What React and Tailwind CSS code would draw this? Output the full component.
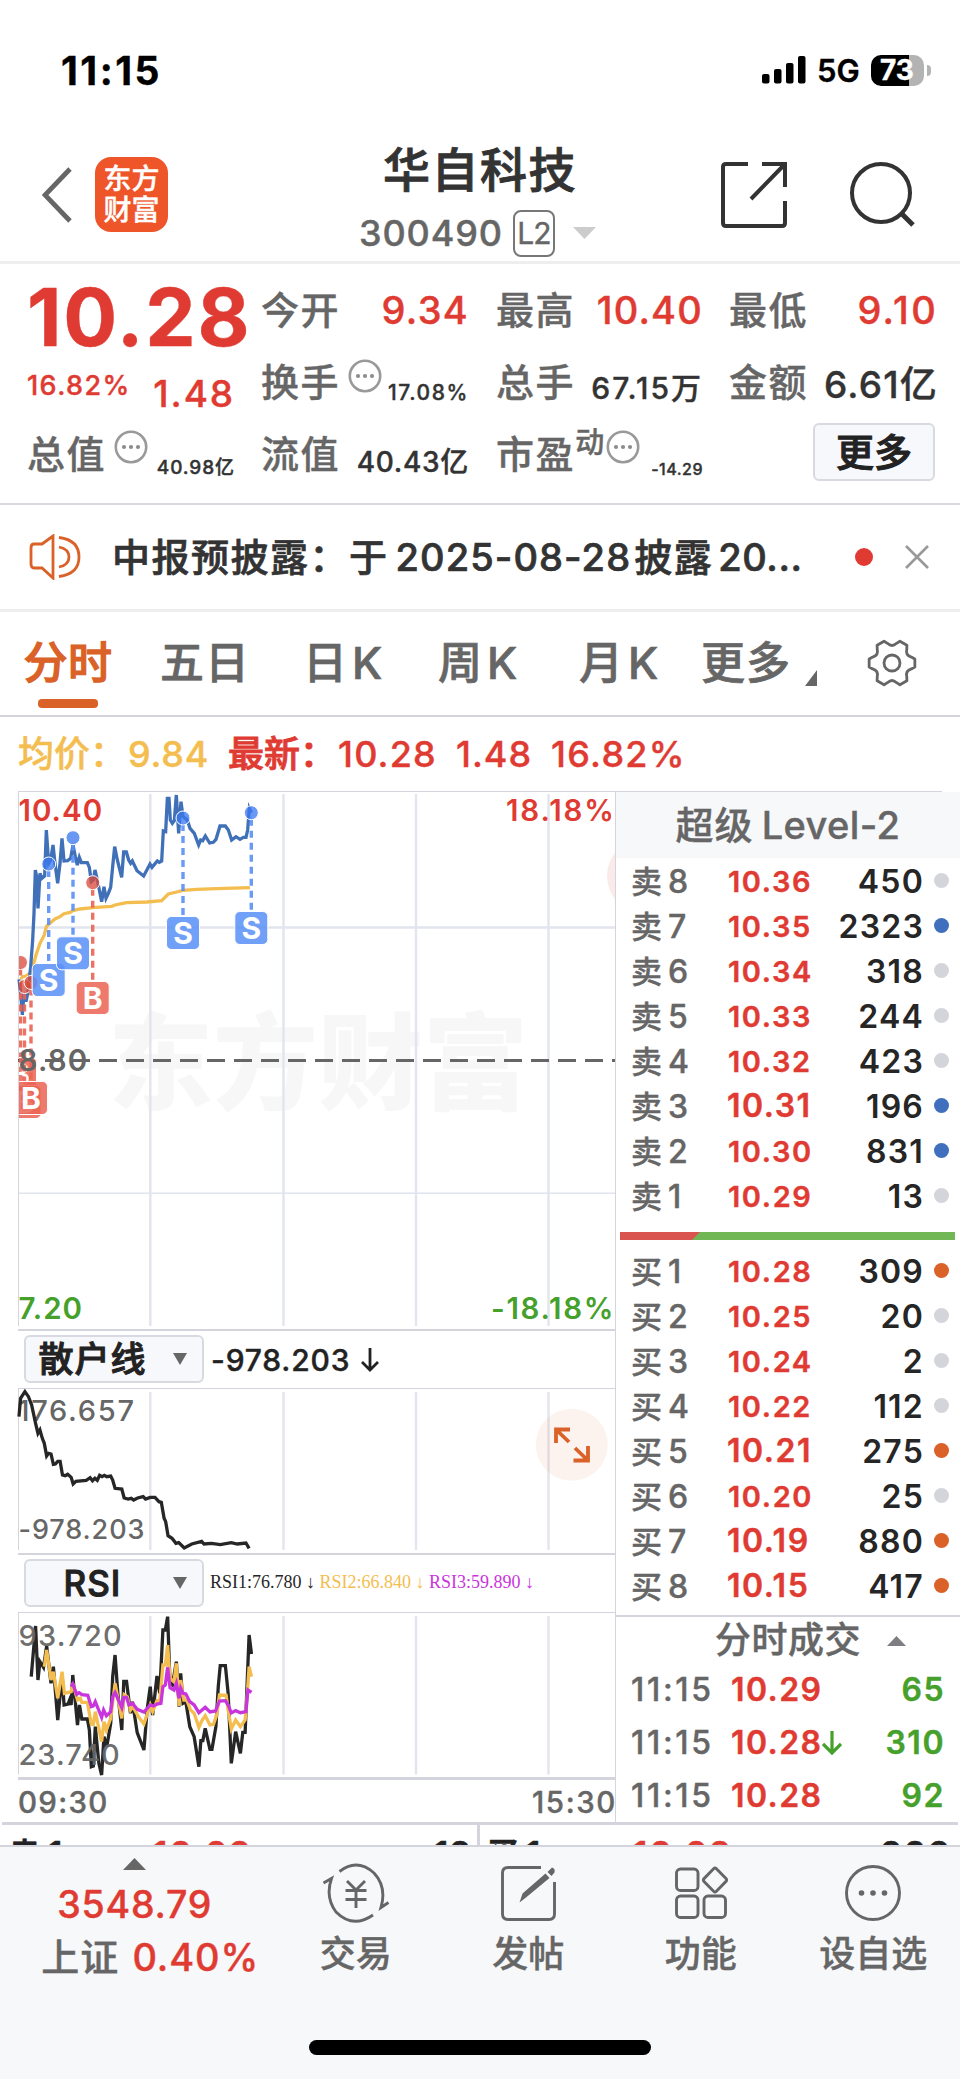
import React from 'react';
import clsx from 'clsx';

const sellRows = [
  { n: 8, price: '10.36', vol: '450', dot: 'gray' },
  { n: 7, price: '10.35', vol: '2323', dot: 'blue' },
  { n: 6, price: '10.34', vol: '318', dot: 'gray' },
  { n: 5, price: '10.33', vol: '244', dot: 'gray' },
  { n: 4, price: '10.32', vol: '423', dot: 'gray' },
  { n: 3, price: '10.31', vol: '196', dot: 'blue', big: true },
  { n: 2, price: '10.30', vol: '831', dot: 'blue' },
  { n: 1, price: '10.29', vol: '13', dot: 'gray' },
];

const buyRows = [
  { n: 1, price: '10.28', vol: '309', dot: 'orange' },
  { n: 2, price: '10.25', vol: '20', dot: 'gray' },
  { n: 3, price: '10.24', vol: '2', dot: 'gray' },
  { n: 4, price: '10.22', vol: '112', dot: 'gray' },
  { n: 5, price: '10.21', vol: '275', dot: 'orange', big: true },
  { n: 6, price: '10.20', vol: '25', dot: 'gray' },
  { n: 7, price: '10.19', vol: '880', dot: 'orange', big: true },
  { n: 8, price: '10.15', vol: '417', dot: 'orange', big: true },
];

const trades = [
  { time: '11:15', price: '10.29', vol: '65' },
  { time: '11:15', price: '10.28', vol: '310', down: true },
  { time: '11:15', price: '10.28', vol: '92' },
];

const dotColors = {
  gray: 'bg-[#d4d5db]',
  blue: 'bg-[#4070bd]',
  orange: 'bg-[#da6127]',
};

const GRID_X = [150.3, 283.5, 416, 548.5];

// Traces are stored in their own drawing units and scaled by the group around them
const PRICE =
  '57,598 62,640 67,705 72,640 78,665 85,630 92,560 98,480 102,400 106,270 110,290 114,385 120,280 126,295 134,288 139,150 146,250 152,240 159,195 165,250 173,310 180,250 186,175 192,243 203,242 212,235 219,195 226,230 232,255 238,232 244,248 262,248 268,262 274,305 280,300 285,270 292,300 305,365 312,320 318,355 325,340 332,322 338,260 344,200 352,240 365,292 371,216 379,216 386,240 392,250 397,243 411,272 431,288 450,252 456,262 472,243 478,247 485,243 490,153 497,155 502,55 507,55 511,120 517,130 523,122 529,45 536,160 543,65 549,110 562,120 570,145 583,160 596,195 602,180 608,182 616,168 629,189 640,187 648,178 660,138 676,138 685,150 695,180 708,170 720,178 730,172 738,172 743,150 748,85 754,98';
const AVERAGE =
  '62,598 68,590 78,588 92,578 100,555 108,525 120,490 133,465 139,440 146,433 165,417 180,410 192,401 210,397 219,392 240,387 278,383 335,379 345,375 365,371 380,368 440,366 485,362 505,342 530,336 549,331 590,328 650,326 750,323';
const RETAIL =
  '48,290 52,235 63,215 72,230 80,255 90,310 96,340 101,330 107,355 112,370 118,408 123,400 129,402 135,433 140,432 146,424 152,424 158,465 165,467 171,463 180,472 185,492 192,484 218,481 228,473 234,482 240,475 246,481 252,466 258,470 264,466 270,470 280,468 285,480 291,505 308,507 314,534 324,537 332,535 338,540 348,534 362,530 368,537 380,532 392,532 402,545 408,547 415,595 419,605 425,647 435,655 445,670 452,668 466,684 485,672 510,664 516,672 535,670 557,674 585,668 600,672 622,669 630,685';
const RSI1 =
  '79,380 90,228 96,390 101,335 110,352 118,288 129,400 135,350 146,510 157,375 162,465 172,462 176,450 180,465 184,375 190,450 196,525 201,465 207,507 221,507 226,540 231,650 236,648 241,530 250,640 257,675 263,560 270,590 280,520 285,380 291,315 298,430 308,540 313,394 320,394 330,490 335,455 347,548 364,600 372,480 380,410 386,495 397,378 404,430 412,240 418,240 424,200 430,400 436,405 446,335 453,470 457,370 463,460 470,455 480,530 491,560 503,650 508,572 513,572 519,535 531,598 536,598 546,530 552,410 557,347 570,347 577,430 585,640 596,545 608,610 614,547 620,547 625,400 630,255 636,312';
const RSI2 =
  '112,350 118,300 129,390 135,365 146,445 157,365 163,430 180,425 184,400 196,450 203,445 207,457 221,457 231,523 236,523 241,485 257,575 263,515 269,540 280,505 291,400 298,445 308,505 314,434 322,440 330,480 336,470 350,500 364,522 380,465 386,485 397,452 404,455 412,345 418,345 424,285 430,385 440,395 446,340 453,468 457,390 465,450 472,450 482,480 491,490 503,532 510,513 519,497 531,525 540,523 548,495 555,435 572,436 577,480 585,537 596,510 608,530 620,510 625,440 630,350 636,380';
const RSI3 =
  '180,410 184,402 194,433 200,428 207,434 222,436 231,470 236,468 241,455 257,502 262,480 269,497 280,485 285,440 291,428 308,473 313,442 320,442 326,465 335,460 347,478 364,486 380,465 388,468 397,462 407,460 412,410 418,405 424,352 430,413 440,420 446,400 453,445 457,415 463,430 470,432 480,455 491,465 503,488 519,472 531,486 545,483 555,453 570,452 577,465 585,489 596,482 608,488 622,485 627,420 636,427';

function Trace({ points, color, width = 3.3 }) {
  return (
    <polyline
      points={points}
      fill="none"
      stroke={color}
      strokeWidth={width}
      strokeLinejoin="miter"
      vectorEffect="non-scaling-stroke"
    />
  );
}

function MoreDots({ className }) {
  return (
    <svg viewBox="0 0 34 34" className={clsx('h-[34px] w-[34px] shrink-0', className)}>
      <circle cx="17" cy="17" r="15.2" fill="none" stroke="#999" strokeWidth="2.6" />
      <circle cx="10" cy="17" r="2.1" fill="#8c8c8c" />
      <circle cx="17" cy="17" r="2.1" fill="#8c8c8c" />
      <circle cx="24" cy="17" r="2.1" fill="#8c8c8c" />
    </svg>
  );
}

function StatusBar() {
  return (
    <div className="flex h-[140px] items-center justify-between pl-[61px] pr-[29px] text-black">
      <span className="text-[39px] font-bold leading-none tracking-[2.5px]">11:15</span>
      <div className="flex items-center">
        <svg viewBox="0 0 44 28" className="h-7 w-11">
          <rect x="0" y="18" width="7.5" height="9.5" rx="2" />
          <rect x="12" y="13" width="7.5" height="14.5" rx="2" />
          <rect x="24" y="7" width="7.5" height="20.5" rx="2" />
          <rect x="36" y="0" width="7.5" height="27.5" rx="2" />
        </svg>
        <span className="ml-[11px] w-[54px] text-[31px] font-semibold leading-none">5G</span>
        <div className="flex h-[31px] w-[53px] items-center overflow-hidden rounded-[10px] bg-[linear-gradient(to_right,#000_38px,#b3b3b3_38px)]">
          <span className="pl-[9px] text-[28px] font-bold leading-none text-white">73</span>
        </div>
        <div className="ml-[3px] h-[11px] w-1 rounded-r-full bg-[#b3b3b3]" />
      </div>
    </div>
  );
}

function Header() {
  return (
    <div className="grid h-[124px] grid-cols-[1fr_auto_1fr] border-b-[3px] border-[#eee]">
      <div className="flex items-start pl-[42px] pt-[17px]">
        <svg viewBox="0 0 30 56" className="mt-2.5 h-14 w-[30px]">
          <path d="M28 2 L3 28 L28 54" fill="none" stroke="#666" strokeWidth="4.8" />
        </svg>
        <div className="ml-[23px] flex h-[75px] w-[73px] flex-col items-center justify-center rounded-2xl bg-[#ee562a] text-[28px] font-medium leading-[31px] text-white">
          <span>东方</span>
          <span>财富</span>
        </div>
      </div>
      <div className="flex flex-col items-center">
        <h1 className="h-[58px] text-[47px] font-medium leading-[59px] tracking-[1.5px] text-[#333] [-webkit-text-stroke:0.9px]">
          华自科技
        </h1>
        <div className="-ml-[5px] flex h-[70px] items-center">
          <span className="text-[36px] font-medium leading-none tracking-[0.9px] text-[#666]">300490</span>
          <span className="ml-2.5 flex h-[47px] w-[42px] items-center justify-center rounded-lg border-2 border-[#777] text-[30px] leading-none tracking-[-1px] text-[#666]">
            L2
          </span>
          <svg viewBox="0 0 23 12" className="ml-[18px] h-3 w-[23px]">
            <path d="M0 0 H23 L11.5 12 Z" fill="#ccc" />
          </svg>
        </div>
      </div>
      <div className="flex items-start justify-end pr-[43px] pt-[21px]">
        <svg viewBox="0 0 70 68" className="h-[68px] w-[70px]" fill="none" stroke="#333" strokeWidth="4">
          <path d="M28 3 H6 Q3 3 3 6 V62 Q3 65 6 65 H62 Q65 65 65 62 V40" />
          <path d="M42 3 H65 V26 M65 3 L31 38" />
        </svg>
        <svg viewBox="0 0 68 68" className="ml-[59px] h-[68px] w-[68px]" fill="none" stroke="#333" strokeWidth="4">
          <circle cx="32" cy="32" r="29" />
          <path d="M53 53 L64 64" strokeWidth="5" />
        </svg>
      </div>
    </div>
  );
}

function Quote({ label, value, className, extra }) {
  return (
    <div className="flex h-[72px] items-center">
      <span className="whitespace-nowrap text-[38px] font-medium leading-none tracking-[1.6px] text-[#666]">{label}</span>
      {extra}
      <span className={clsx('ml-auto whitespace-nowrap font-medium leading-none', className)}>{value}</span>
    </div>
  );
}

function QuotePanel() {
  return (
    <div className="flex h-[241px] border-b-2 border-[#d9d9e0] pl-[27px] pt-[10px]">
      <div className="w-[208px]">
        <div className="flex h-[72px] items-center pt-[13px]">
          <span className="text-[80px] font-bold leading-none tracking-[1.8px] text-[#e03b32]">10.28</span>
        </div>
        <div className="flex h-[72px] items-center font-medium text-[#e03b32]">
          <span className="mt-[7px] text-[27px] leading-none tracking-[1.4px]">16.82%</span>
          <span className="ml-auto mt-[22px] text-[37px] leading-none tracking-[1.9px]">1.48</span>
        </div>
        <Quote
          label="总值"
          value="40.98亿"
          className="mt-[26px] text-[19px] tracking-[0.9px] text-[#333]"
          extra={<MoreDots className="-mt-[15px] ml-[8px]" />}
        />
      </div>
      <div className="ml-[26px] w-[208px]">
        <Quote label="今开" value="9.34" className="text-[38px] tracking-[1.3px] text-[#e03b32]" />
        <Quote
          label="换手"
          value="17.08%"
          className="mt-[21px] text-[21px] tracking-[1.6px] text-[#333]"
          extra={<MoreDots className="-mt-[13px] ml-[8px]" />}
        />
        <Quote label="流值" value="40.43亿" className="mt-[15px] text-[28px] tracking-[0.7px] text-[#333]" />
      </div>
      <div className="ml-[27px] w-[207px]">
        <Quote label="最高" value="10.40" className="text-[38px] tracking-[1.2px] text-[#e03b32]" />
        <Quote label="总手" value="67.15万" className="mt-[11px] text-[30px] tracking-[2px] text-[#333]" />
        <Quote
          label="市盈"
          value="-14.29"
          className="mt-[30px] text-[16px] tracking-[0.5px] text-[#333]"
          extra={
            <>
              <span className="-mt-[24px] text-[29px] font-medium leading-none text-[#666]">动</span>
              <MoreDots className="-mt-[15px] ml-[2px]" />
            </>
          }
        />
      </div>
      <div className="ml-[26px] w-[209px]">
        <Quote label="最低" value="9.10" className="text-[38px] tracking-[2.3px] text-[#e03b32]" />
        <Quote label="金额" value="6.61亿" className="mt-[4px] text-[37px] tracking-[1.2px] text-[#333]" />
        <div className="flex h-[72px] items-center justify-end">
          <button className="mb-[5px] mr-[3px] flex h-[58px] w-[122px] items-center justify-center rounded-md border-2 border-[#d9dae1] bg-[#f7f8fb] text-[38px] font-medium leading-none text-[#222] [-webkit-text-stroke:1px]">
            更多
          </button>
        </div>
      </div>
    </div>
  );
}

function Notice() {
  return (
    <div className="flex h-[107px] items-center border-b-[3px] border-[#eee] pl-[29px] pr-[31px]">
      <svg viewBox="0 0 52 46" className="h-[46px] w-[52px]" fill="none" stroke="#da6127" strokeWidth="2.8">
        <path d="M13 10 L24 2 V44 L13 34 H5 Q2 34 2 30 V14 Q2 10 5 10 Z" />
        <path d="M30 13 Q40 15 40 23 Q40 31 30 33" />
        <path d="M30 3.5 Q50 6 50 23 Q50 40 30 42.5" />
      </svg>
      <span className="ml-[31px] whitespace-nowrap text-[38px] font-medium leading-none tracking-[1.5px] text-[#333] [-webkit-text-stroke:0.7px]">
        中报预披露：于<span className="ml-[7px] mr-[3px] tracking-[1.1px]">2025-08-28</span>披露
        <span className="ml-[5px] tracking-[0.6px]">20...</span>
      </span>
      <span className="ml-auto h-[18px] w-[18px] rounded-full bg-[#e03b32]" />
      <svg viewBox="0 0 24 24" className="ml-[32px] h-6 w-6" stroke="#999" strokeWidth="2.6">
        <path d="M1 1 L23 23 M23 1 L1 23" />
      </svg>
    </div>
  );
}

// Six flat teeth joined by concave valleys
function gearPath() {
  const at = (r, deg) => {
    const a = (deg * Math.PI) / 180;
    return `${(26 + r * Math.cos(a)).toFixed(2)} ${(25 + r * Math.sin(a)).toFixed(2)}`;
  };
  let d = '';
  for (let i = 0; i < 6; i++) {
    const t = i * 60;
    d += `${i ? 'L' : 'M'}${at(23.2, t - 10)} L${at(23.2, t + 10)} L${at(20.2, t + 17)} Q${at(15.4, t + 30)} ${at(20.2, t + 43)} `;
  }
  return d + 'Z';
}

function Tabs() {
  const tab = 'whitespace-nowrap text-[44px] font-medium leading-none tracking-[1px] text-[#666] [-webkit-text-stroke:0.7px]';
  return (
    <div className="flex h-[105px] items-start border-b-2 border-[#d4d5dc] pt-[29px]">
      <div className="ml-[22px] flex w-[92px] flex-col items-center">
        <span className="whitespace-nowrap text-[44px] font-medium leading-none tracking-[0.5px] text-[#da6127] [-webkit-text-stroke:1.2px]">
          分时
        </span>
        <span className="mt-[14px] h-[9px] w-[60px] rounded-[4px] bg-[#da6127]" />
      </div>
      <span className={clsx(tab, 'ml-[46px] w-[143px]')}>五日</span>
      <span className={clsx(tab, 'w-[135px]')}>日<span className="ml-1">K</span></span>
      <span className={clsx(tab, 'w-[141px]')}>周<span className="ml-1">K</span></span>
      <span className={clsx(tab, 'w-[122px]')}>月<span className="ml-1">K</span></span>
      <span className={clsx(tab, 'w-[104px]')}>更多</span>
      <svg viewBox="0 0 12 16" className="mt-[29px] h-4 w-3">
        <path d="M12 0 V16 H0 Z" fill="#666" />
      </svg>
      <svg
        viewBox="0 0 52 50"
        className="-mt-[3px] ml-[49px] h-[50px] w-[52px]"
        fill="none"
        stroke="#666"
        strokeWidth="2.8"
        strokeLinejoin="round"
      >
        <path d={gearPath()} />
        <circle cx="26" cy="25" r="8" />
      </svg>
    </div>
  );
}

function Marker({ type, x, y, boxY, boxX = x }) {
  const color = type === 'S' ? '#5a90f8' : '#ea6454';
  return (
    <g>
      <line x1={x} x2={x} y1={y + 6} y2={boxY - 16} stroke={color} strokeWidth="3.4" strokeDasharray="7 5" opacity="0.9" />
      <circle cx={x} cy={y} r="7" fill={type === 'S' ? '#3a77f0' : '#d94a3a'} fillOpacity="0.76" stroke="#fff" strokeWidth="1" />
      <rect x={boxX - 16.5} y={boxY - 16.5} width="33" height="33" rx="5" fill={color} fillOpacity="0.86" stroke="#fff" strokeWidth="1" />
      <text x={boxX} y={boxY + 11} fill="#fff" fontSize="30" fontWeight="700" textAnchor="middle">
        {type}
      </text>
    </g>
  );
}

function PriceChart() {
  return (
    <svg viewBox="0 791 615 540" className="block h-[540px] w-[615px]">
      <defs>
        <clipPath id="plot">
          <rect x="19" y="791" width="596" height="538" />
        </clipPath>
      </defs>
      <text x="108" y="1101" fill="#f7f7f7" fontSize="105" fontWeight="900">
        东方财富
      </text>
      <circle cx="645" cy="876" r="38" fill="#fbeaea" />
      <g stroke="#e2e4ee" strokeWidth="2.4">
        {GRID_X.map((x) => (
          <line key={x} x1={x} x2={x} y1="794" y2="1326" />
        ))}
        <line x1="19" x2="615" y1="927.5" y2="927.5" />
        <line x1="19" x2="615" y1="1193.2" y2="1193.2" strokeWidth="1.6" />
      </g>
      <line x1="18" x2="615" y1="791.5" y2="791.5" stroke="#d4d5dc" />
      <line x1="18.5" x2="18.5" y1="792" y2="1326" stroke="#d4d5dc" />
      <line x1="18" x2="615" y1="1330" y2="1330" stroke="#d4d5dc" strokeWidth="2" />
      <line x1="18" x2="615" y1="1060.5" y2="1060.5" stroke="#666" strokeWidth="3" strokeDasharray="18 9" />
      <g transform="translate(0 780) scale(0.33333)">
        <Trace points={AVERAGE} color="#f4bd50" />
        <Trace points={PRICE} color="#3f70b8" />
      </g>
      <g clipPath="url(#plot)">
        <Marker type="B" x={20.5} y={962.5} boxX={20} boxY={1074} />
        <Marker type="B" x={24.5} y={986.5} boxX={24.5} boxY={1102} />
        <Marker type="B" x={31} y={982.5} boxX={31} boxY={1098} />
        <Marker type="S" x={48.7} y={864} boxY={980} />
        <Marker type="S" x={73} y={837.7} boxY={953.3} />
        <Marker type="B" x={92.7} y={882.7} boxY={998} />
        <Marker type="S" x={183} y={818} boxY={933} />
        <Marker type="S" x={251.3} y={812.7} boxY={928} />
      </g>
      <g fontSize="29.5" fontWeight="600">
        <text x="18.5" y="821.3" fill="#e03b32" letterSpacing="1">10.40</text>
        <text x="506" y="821.3" fill="#e03b32" letterSpacing="1.9">18.18%</text>
        <text x="18.5" y="1070.5" fill="#666" letterSpacing="1.2">8.80</text>
        <text x="18.5" y="1318.5" fill="#46a02c" letterSpacing="1">7.20</text>
        <text x="491" y="1318.5" fill="#46a02c" letterSpacing="1.7">-18.18%</text>
      </g>
    </svg>
  );
}

function IndicatorBar({ name, children }) {
  return (
    <div className="flex h-[57px] items-start pl-6 pt-1">
      <button className="flex h-[48px] w-[180px] shrink-0 items-center rounded-md border-2 border-[#d9dae1] bg-[#f7f8fb] pr-[15px]">
        <span className="w-[133px] whitespace-nowrap text-center text-[35px] font-medium leading-none tracking-[1px] text-[#222] [-webkit-text-stroke:1px]">
          {name}
        </span>
        <svg viewBox="0 0 14 12" className="ml-auto h-3 w-3.5">
          <path d="M0 0 H14 L7 12 Z" fill="#666" />
        </svg>
      </button>
      {children}
    </div>
  );
}

function Frame({ top, bottom, lineWidth }) {
  return (
    <>
      <g stroke="#e2e4ee" strokeWidth="2.4">
        {GRID_X.map((x) => (
          <line key={x} x1={x} x2={x} y1={top + 4} y2={bottom - 4} />
        ))}
      </g>
      <line x1="18" x2="615" y1={top + 0.5} y2={top + 0.5} stroke="#d4d5dc" />
      <line x1="18.5" x2="18.5" y1={top} y2={bottom - 4} stroke="#d4d5dc" />
      <line x1="18" x2="615" y1={bottom} y2={bottom} stroke="#d4d5dc" strokeWidth={lineWidth} />
    </>
  );
}

function RetailChart() {
  return (
    <svg viewBox="0 1388 615 167" className="block h-[167px] w-[615px]">
      <Frame top={1388} bottom={1554} lineWidth={2} />
      <g fontWeight="550" fill="#666">
        <text x="17.5" y="1421" fontSize="29" letterSpacing="1.7">176.657</text>
        <text x="18.5" y="1538.5" fontSize="27" letterSpacing="0.9">-978.203</text>
      </g>
      <g transform="translate(0 1320) scale(0.3954 0.33333)">
        <Trace points={RETAIL} color="#262626" />
      </g>
      <circle cx="571.8" cy="1444.7" r="36" fill="#da6127" fillOpacity="0.08" />
      <g fill="none" stroke="#da6127" strokeWidth="3.8">
        <path d="M556 1443 V1429.5 H570 M556.5 1430 L569 1442" />
        <path d="M588 1446 V1460.5 H573.5 M587.5 1460 L575 1448" />
      </g>
    </svg>
  );
}

function RsiChart() {
  return (
    <svg viewBox="0 1612 615 168" className="block h-[168px] w-[615px]">
      <Frame top={1612} bottom={1778.5} lineWidth={3} />
      <g transform="translate(0 1550) scale(0.3954 0.33333)">
        <Trace points={RSI1} color="#262626" />
        <Trace points={RSI2} color="#f4bd50" />
        <Trace points={RSI3} color="#c935dd" />
      </g>
      <g fontWeight="550" fontSize="29" fill="#666" fillOpacity="0.95">
        <text x="18.5" y="1645.5" letterSpacing="1.2">93.720</text>
        <text x="18.5" y="1765" letterSpacing="1">23.740</text>
      </g>
    </svg>
  );
}

function ChartColumn() {
  return (
    <div className="w-[616px] border-r border-[#d4d5dc]">
      <PriceChart />
      <IndicatorBar name="散户线">
        <span className="ml-[7px] mt-[10px] text-[30px] font-medium leading-none tracking-[0.8px] text-[#222]">-978.203</span>
        <svg viewBox="0 0 18 24" className="ml-[11px] mt-[13px] h-6 w-[18px]" fill="none" stroke="#222" strokeWidth="2.8">
          <path d="M9 0 V22 M1 14 L9 22 L17 14" />
        </svg>
      </IndicatorBar>
      <RetailChart />
      <IndicatorBar name="RSI">
        <div className="ml-[6px] mt-[14px] whitespace-pre font-['Liberation_Serif',serif] text-[18px] leading-none text-[#262626] [-webkit-text-stroke:0px]">
          RSI1:76.780 ↓ <span className="text-[#f4bd50]">RSI2:66.840 ↓ </span>
          <span className="text-[#c935dd]">RSI3:59.890 ↓</span>
        </div>
      </IndicatorBar>
      <RsiChart />
      <div className="flex h-[42px] items-center justify-between pl-[18px] pt-[3px] text-[29.5px] font-medium leading-none tracking-[1.3px] text-[#666]">
        <span>09:30</span>
        <span className="-mr-[2px] tracking-[1.6px]">15:30</span>
      </div>
    </div>
  );
}

function DepthRow({ side, row }) {
  return (
    <div className="flex h-[45px] items-center pl-[15px] pr-[11px] leading-none">
      <span className="w-[37px] pt-0.5 text-[31px] font-medium text-[#666]">{side}</span>
      <span className="w-[58px] pt-0.5 text-[32px] font-medium text-[#666]">{row.n}</span>
      <span
        className={clsx(
          'w-[100px] whitespace-nowrap pt-px font-semibold text-[#e03b32]',
          row.big ? 'ml-[1px] text-[32px] tracking-[1.5px]' : 'ml-[2px] text-[29px] tracking-[1.6px]'
        )}
      >
        {row.price}
      </span>
      <span className="ml-auto pt-0.5 text-[32px] font-semibold tracking-[1.2px] text-[#262626] [-webkit-text-stroke:0px]">{row.vol}</span>
      <span className={clsx('ml-[10px] h-[15px] w-[15px] rounded-full', dotColors[row.dot])} />
    </div>
  );
}

function DepthColumn() {
  return (
    <div className="flex w-[344px] flex-col">
      <div className="mr-[18px] h-px bg-[#d4d5dc]" />
      <div className="flex h-[66px] items-center justify-center whitespace-nowrap bg-[#f7f8fa] text-[38px] font-medium leading-none text-[#666]">
        <span className="tracking-[1px]">超级</span>
        <span className="ml-2 tracking-[0.4px]">Level-2</span>
      </div>
      {sellRows.map((row) => (
        <DepthRow key={row.n} side="卖" row={row} />
      ))}
      <div className="ml-1 mr-[5px] mt-[14px] h-2 bg-[#72b755]">
        <div className="h-2 w-[80px] bg-[#d9544f] [clip-path:polygon(0_0,100%_0,72px_100%,0_100%)]" />
      </div>
      <div className="mt-2">
        {buyRows.map((row) => (
          <DepthRow key={row.n} side="买" row={row} />
        ))}
      </div>
      <div className="mt-[7px] h-0.5 bg-[#d4d5dc]" />
      <div className="flex h-[45px] items-center pl-[99px] text-[36px] font-medium leading-none tracking-[0.5px] text-[#666]">
        分时成交
        <svg viewBox="0 0 19 10" className="ml-[26px] mt-0.5 h-2.5 w-[19px]">
          <path d="M0 10 L9.5 0 L19 10 Z" fill="#7d7d83" />
        </svg>
      </div>
      {trades.map((trade, i) => (
        <div key={i} className="flex h-[53px] items-center pl-[15px] pr-[15px] pt-0.5 text-[32px] font-semibold leading-none">
          <span className="w-[100px] font-medium tracking-[2.7px] text-[#666]">{trade.time}</span>
          <span className="tracking-[1.4px] text-[#e03b32]">{trade.price}</span>
          {trade.down && (
            <svg viewBox="0 0 20 26" className="h-[26px] w-5" fill="none" stroke="#46a02c" strokeWidth="3.2">
              <path d="M10 1 V23 M1 14 L10 23 L19 14" />
            </svg>
          )}
          <span className="ml-auto tracking-[1.5px] text-[#46a02c]">{trade.vol}</span>
        </div>
      ))}
    </div>
  );
}

// First line of the order list, cut off by the bottom bar
function OrderPeek() {
  return (
    <div className="flex h-5 overflow-hidden text-[34px] font-semibold leading-[58px] text-[#222]">
      <div className="flex w-[480px] border-r-[3px] border-[#d4d5dc] pl-[9px] pr-[5px]">
        <span className="text-[31px]">卖</span>
        <span className="ml-2 w-[105px]">1</span>
        <span className="tracking-[2px] text-[#e03b32]">10.29</span>
        <span className="ml-auto tracking-[1px]">13</span>
      </div>
      <div className="flex w-[480px] pl-[7px] pr-[8px]">
        <span className="text-[31px]">买</span>
        <span className="ml-2 w-[107px]">1</span>
        <span className="tracking-[2px] text-[#e03b32]">10.28</span>
        <span className="ml-auto tracking-[2px]">309</span>
      </div>
    </div>
  );
}

function NavItem({ label, children }) {
  return (
    <div className="flex w-[172.5px] flex-col items-center pt-[13px]">
      <svg viewBox="0 0 70 66" className="h-[66px] w-[70px]" fill="none" stroke="#666" strokeWidth="2.9">
        {children}
      </svg>
      <span className="mt-[10px] whitespace-nowrap text-[36px] font-medium leading-none text-[#666]">{label}</span>
    </div>
  );
}

function BottomBar() {
  return (
    <div className="flex h-[234px] flex-col border-t-2 border-[#d4d5dc] bg-[#f7f8fa]">
      <div className="flex h-[193px]">
        <div className="flex w-[269.5px] flex-col items-center pt-[11px]">
          <svg viewBox="0 0 23 12" className="h-3 w-[23px]">
            <path d="M0 12 L11.5 0 L23 12 Z" fill="#666" />
          </svg>
          <span className="mt-[16px] text-[37.5px] font-medium leading-none tracking-[0.8px] text-[#e03b32]">3548.79</span>
          <div className="ml-[31px] mt-[14px] flex items-center text-[38px] font-medium leading-none">
            <span className="tracking-[1px] text-[#666]">上证</span>
            <span className="ml-[13px] tracking-[0.9px] text-[#e03b32]">0.40%</span>
          </div>
        </div>
        <NavItem label="交易">
          <path d="M2.5 23 L10.5 18.5 Q4 37 15 52 Q32 69 52 55" />
          <path d="M18.5 11.5 Q36 -2 53 13 Q66 27 60 47.5 L67.5 42.5" />
          <path d="M26 21 L35 30 L44 21 M24.5 30.5 H45.5 M24.5 39.5 H45.5 M35 30 V48" />
        </NavItem>
        <NavItem label="发帖">
          <path d="M48 7.5 H15 Q9.5 7.5 9.5 13 V54 Q9.5 59.5 15 59.5 H56 Q61.5 59.5 61.5 54 V22" />
          <path d="M26.5 42.5 L29.5 33.5 L52.5 13.5 L56.5 18 L33 37.5 Z M54.5 12 L59 7.5 Q62.5 8.5 61.5 12.5 L58.5 16 Z" fill="#666" stroke="none" />
        </NavItem>
        <NavItem label="功能">
          <rect x="10.5" y="9" width="21.5" height="21.5" rx="4" />
          <rect x="10.5" y="36" width="21.5" height="21.5" rx="4" />
          <rect x="38" y="36" width="21.5" height="21.5" rx="4" />
          <path d="M47.6 8.7 Q49 7.3 50.4 8.7 L60 18.6 Q61.4 20 60 21.4 L50.4 31.3 Q49 32.7 47.6 31.3 L38 21.4 Q36.6 20 38 18.6 Z" />
        </NavItem>
        <NavItem label="设自选">
          <circle cx="35" cy="33" r="26.5" />
          <g fill="#666" stroke="none">
            <circle cx="23.5" cy="33" r="2.8" />
            <circle cx="35" cy="33" r="2.8" />
            <circle cx="46.5" cy="33" r="2.8" />
          </g>
        </NavItem>
      </div>
      <div className="mx-auto h-[15px] w-[342px] rounded-full bg-black" />
    </div>
  );
}

export default function App() {
  return (
    <div className="h-[2079px] w-[960px] overflow-hidden bg-white font-['Inter','Noto_Sans_CJK_SC',sans-serif] [-webkit-text-stroke:0.4px]">
      <StatusBar />
      <Header />
      <QuotePanel />
      <Notice />
      <Tabs />
      <div className="flex h-[74px] items-center whitespace-pre pl-[18px] text-[36px] font-medium leading-none text-[#e03b32]">
        <span className="w-[110px] text-[#f4bd50]">均价：</span>
        <span className="w-[100px] tracking-[0.8px] text-[#f4bd50]">9.84</span>
        <span className="w-[110px] [-webkit-text-stroke:0.9px]">最新：</span>
        <span className="w-[118px] tracking-[1.2px]">10.28</span>
        <span className="w-[95px] tracking-[1px]">1.48</span>
        <span className="tracking-[1.3px]">16.82%</span>
      </div>
      <div className="flex h-[1031px]">
        <ChartColumn />
        <DepthColumn />
      </div>
      <div className="mx-0.5 h-[3px] bg-[#d4d5dc]" />
      <OrderPeek />
      <BottomBar />
    </div>
  );
}
